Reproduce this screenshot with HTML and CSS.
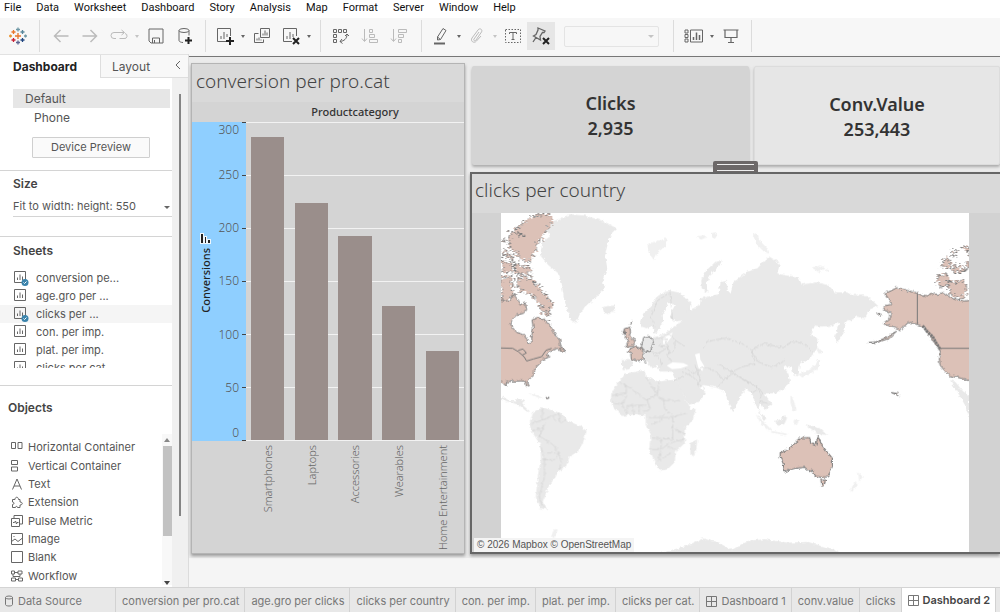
FILE: index.html
```html
<!DOCTYPE html>
<html lang="en">
<head>
  <meta charset="UTF-8">
  <title>Dashboard 2</title>
  <meta name="viewport" content="width=device-width, initial-scale=1.0">
  <link rel="stylesheet" href="styles.css">
</head>
<body>
  <nav class="menu">
    <a href="#">File</a>
    <a href="#">Data</a>
    <a href="#">Worksheet</a>
    <a href="#">Dashboard</a>
    <a href="#">Story</a>
    <a href="#">Analysis</a>
    <a href="#">Map</a>
    <a href="#">Format</a>
    <a href="#">Server</a>
    <a href="#">Window</a>
    <a href="#">Help</a>
  </nav>

  <div class="toolbar">
    <div class="group logo">
      <svg width="18" height="18" viewBox="0 0 18 18" fill="none" stroke-width="1.3">
        <path d="M9 6v6M6 9h6" stroke="#e8762c"/>
        <path d="M9 0.5v4M7 2.5h4" stroke="#7099a6"/>
        <path d="M9 13.5v4M7 15.5h4" stroke="#5b6591"/>
        <path d="M4.5 3v4M2.5 5h4" stroke="#e8762c"/>
        <path d="M13.5 3v4M11.5 5h4" stroke="#59879b"/>
        <path d="M4.5 11v4M2.5 13h4" stroke="#c72035"/>
        <path d="M13.5 11v4M11.5 13h4" stroke="#1f447e"/>
        <path d="M1.5 7.5v3M0 9h3" stroke="#eb912c"/>
        <path d="M16.5 7.5v3M15 9h3" stroke="#7099a6"/>
      </svg>
    </div>
    <div class="group history">
      <button class="tool off" aria-label="Undo"><svg width="16" height="16" viewBox="0 0 16 16"><path d="M15.5 8H1.5M7.5 2l-6 6 6 6" stroke-width="1.5"/></svg></button>
      <button class="tool off" aria-label="Redo"><svg width="16" height="16" viewBox="0 0 16 16"><path d="M0.5 8h14M8.5 2l6 6-6 6" stroke-width="1.5"/></svg></button>
      <button class="tool off" aria-label="Replay"><svg width="18" height="16" viewBox="0 0 18 16"><path d="M6 10.5H4a3 3 0 0 1 0-6h10M11.5 2l3 2.500-3 2.500M15 5.500a2.500 2.500 0 0 1-1 5H9.500"/></svg></button>
      <span class="caret off"></span>
      <button class="tool" aria-label="Save"><svg width="16" height="16" viewBox="0 0 16 16"><path d="M1 1h14v14H3l-2-2zM4.500 15v-5h7v5M6.500 12v3"/></svg></button>
      <button class="tool" aria-label="New data source"><svg width="16" height="18" viewBox="0 0 16 18"><path d="M2 3.500v10c0 1 2 2 4 2M12 3.500v5"/><ellipse cx="7" cy="3.500" rx="5" ry="2"/><path class="mark" d="M11.500 10v7M8 13.500h7"/></svg></button>
    </div>
    <div class="group sheets-tools">
      <button class="tool" aria-label="New worksheet"><svg width="18" height="18" viewBox="0 0 18 18"><path d="M10 14.500H1.500v-13h13V9M5 12V9M8 12V5M11 10V7"/><path class="mark" d="M14 10v8M10 14h8"/></svg></button>
      <span class="caret"></span>
      <button class="tool" aria-label="Duplicate"><svg width="18" height="18" viewBox="0 0 18 18"><path d="M7.500 1.500h9v9h-9zM10 8.500v-2M12 8.500v-5M14 8.500v-3M5.500 6.500h-4v9h9v-3M4 13.500v-2M6 13.500v-3M8 13.500v-1"/></svg></button>
      <button class="tool" aria-label="Clear sheet"><svg width="18" height="18" viewBox="0 0 18 18"><path d="M10 14.500H1.500v-13h13V9M5 12V9M8 12V5M11 10V7"/><path class="mark" d="M11 11l6 6M17 11l-6 6"/></svg></button>
      <span class="caret"></span>
    </div>
    <div class="group sort-tools">
      <button class="tool" aria-label="Swap rows and columns"><svg width="18" height="18" viewBox="0 0 18 18"><path d="M1.500 2.500h3v3h-3zM6.500 2.500h3v3h-3zM11.500 2.500h3v3h-3zM1.500 7.500h3v3h-3zM1.500 12.500h3v3h-3zM15 7c0 5-3 7-7 7.500M13 9l2-2 2 2M10 12l-2 2.500 2.500 2"/></svg></button>
      <button class="tool off" aria-label="Sort ascending"><svg width="18" height="16" viewBox="0 0 18 16"><path d="M3.500 1v12M1 10.500l2.500 3 2.500-3M8.500 1.500h3v3h-3zM8.500 6.500h5v3h-5zM8.500 11.500h8v3h-8z"/></svg></button>
      <button class="tool off" aria-label="Sort descending"><svg width="18" height="16" viewBox="0 0 18 16"><path d="M3.500 1v12M1 10.500l2.500 3 2.500-3M8.500 1.500h8v3h-8zM8.500 6.500h5v3h-5zM8.500 11.500h3v3h-3z"/></svg></button>
    </div>
    <div class="group format-tools">
      <button class="tool" aria-label="Highlight"><svg width="16" height="18" viewBox="0 0 16 18"><path d="M10 1.500l3 2-5.500 9-3 .5v-3zM4.500 10l3 2.500"/><path d="M1 16.500h11" stroke-width="2"/></svg></button>
      <span class="caret"></span>
      <button class="tool off" aria-label="Group"><svg width="16" height="16" viewBox="0 0 16 16"><path d="M10 4L5 11c-1 1.500 1 2.500 2 1l5.500-8c1.500-2.500-2-4.500-3.500-2L3 10c-2 3 2 6 4.500 3L12 8"/></svg></button>
      <span class="caret off"></span>
      <button class="tool" aria-label="Show mark labels"><svg width="16" height="16" viewBox="0 0 16 16"><path d="M.5 1.500h15v13H.5z" stroke-dasharray="1.500 1.500"/><path d="M4.500 6V4.500h7V6M8 4.500v7M6.500 11.500h3"/></svg></button>
      <button class="tool on" aria-label="Fix axes"><svg width="20" height="20" viewBox="0 0 20 20"><path d="M7 2l7 3-1 1.500-1.500 0-2.500 4 .5 3.500-7-4 2.500-1.500 2-4.500zM5 11.500L2 16" stroke-width="1.300"/><path class="mark" d="M12 12l6 6M18 12l-6 6"/></svg></button>
      <div class="fit"><select aria-label="Fit" disabled><option></option></select></div>
    </div>
    <div class="group view-tools">
      <button class="tool" aria-label="Show cards"><svg width="20" height="16" viewBox="0 0 20 16"><path d="M1 2h3v3H1zM1 6.500h3v3H1zM1 11h3v3H1zM6.500 2h12v12h-12z"/><path d="M9.500 12V9M12.500 12V4.500M15.500 12V7" stroke-width="1.500"/></svg></button>
      <span class="caret"></span>
      <button class="tool" aria-label="Presentation mode"><svg width="16" height="16" viewBox="0 0 16 16"><path d="M.5 2h15M2 2v7.500h12V2M8 9.500V14M5 14.500h6" stroke-width="1.200"/></svg></button>
    </div>
  </div>

  <div class="main">
    <aside class="side">
      <div class="side-tabs">
        <button class="side-tab active">Dashboard</button>
        <button class="side-tab">Layout</button>
        <button class="collapse" aria-label="Collapse"><svg width="6" height="10" viewBox="0 0 6 10"><path d="M5 1L1 5l4 4"/></svg></button>
      </div>
      <div class="side-body">
        <div class="side-content">
          <section class="device">
            <a class="device-item selected" href="#">Default</a>
            <a class="device-item child" href="#">Phone</a>
            <button class="preview">Device Preview</button>
          </section>
          <section class="size">
            <h3><label for="size">Size</label></h3>
            <div class="size-box">
              <select id="size"><option>Fit to width: height: 550</option></select>
            </div>
          </section>
          <section class="sheets">
            <h3>Sheets</h3>
            <ul>
              <li><svg class="sheet-icon" viewBox="0 0 16 16"><use href="#sheet"/><use href="#used"/></svg>conversion pe...</li>
              <li><svg class="sheet-icon" viewBox="0 0 16 16"><use href="#sheet"/></svg>age.gro per ...</li>
              <li class="hover"><svg class="sheet-icon" viewBox="0 0 16 16"><use href="#sheet"/><use href="#used"/></svg>clicks per ...</li>
              <li><svg class="sheet-icon" viewBox="0 0 16 16"><use href="#sheet"/></svg>con. per imp.</li>
              <li><svg class="sheet-icon" viewBox="0 0 16 16"><use href="#sheet"/></svg>plat. per imp.</li>
              <li><svg class="sheet-icon" viewBox="0 0 16 16"><use href="#sheet"/></svg>clicks per cat.</li>
            </ul>
          </section>
          <section class="objects">
            <h3>Objects</h3>
            <div class="objects-box">
              <ul>
                <li><svg viewBox="0 0 12 12"><path d="M.5 1.500h4v6h-4zM7 1.500h4v6H7z"/></svg>Horizontal Container</li>
                <li><svg viewBox="0 0 12 12"><path d="M.5 .5h6v4h-6zM.5 7h6v4h-6z"/></svg>Vertical Container</li>
                <li><svg viewBox="0 0 12 12"><path d="M1.500 11.500L6 1l4.500 10.500M3 8h6"/></svg>Text</li>
                <li><svg viewBox="0 0 12 12"><path d="M1.500 11.500V8.500c2 0 2-2.500 0-2.500V3.500h2.500c0-3 3.500-3 3.500 0H9V6c3 0 3 3 0 3v2.500H6.500c0-1.500-2-1.500-2 0z"/></svg>Extension</li>
                <li><svg viewBox="0 0 12 12"><path d="M.5 3.500h8v8h-8zM3 3V.5h8.500V9H9M2 7.500h1.500L4.500 6l1 3 .5-1.500h1.500"/></svg>Pulse Metric</li>
                <li><svg viewBox="0 0 12 12"><path d="M.5 .5h11v11H.5zM.5 8.500L4 6l3 2.500L11.500 5M3 3v1"/></svg>Image</li>
                <li><svg viewBox="0 0 12 12"><path d="M.5 .5h11v11H.5z"/></svg>Blank</li>
                <li><svg viewBox="0 0 12 12"><path d="M.5 1h3v3h-3zM7 1h4v3H7zM3.500 2.500H7M2 4v2.500h7V4M.5 8h4v3h-4zM7.500 8h4v3h-4zM5 9.500h2"/></svg>Workflow</li>
              </ul>
              <div class="scroll"><i class="up"></i><i class="thumb"></i><i class="down"></i></div>
            </div>
          </section>
        </div>
        <div class="side-scroll"></div>
      </div>
    </aside>

    <main class="canvas">
      <div class="dashboard">
        <section class="panel chart">
          <h2>conversion per pro.cat</h2>
          <div class="chart-head">Productcategory</div>
          <div class="plot-row">
            <div class="axis">
              <div class="axis-title">
                <svg width="11" height="11" viewBox="0 0 11 11"><path d="M0 0h4v3h3v3h4v5H0z" fill="#eef6fc"/><path d="M1 1h2v9H1zM5 4h1v6H5zM8 7h2v3H8z" fill="#222"/></svg>
                <span>Conversions</span>
              </div>
              <div class="ticks">
                <span>300</span><span>250</span><span>200</span><span>150</span><span>100</span><span>50</span><span>0</span>
              </div>
            </div>
            <div class="plot">
              <div class="bar" style="height: 95.3%"></div>
              <div class="bar" style="height: 74.4%"></div>
              <div class="bar" style="height: 64%"></div>
              <div class="bar" style="height: 42.2%"></div>
              <div class="bar" style="height: 28%"></div>
            </div>
          </div>
          <div class="categories">
            <span>Smartphones</span>
            <span>Laptops</span>
            <span>Accessories</span>
            <span>Wearables</span>
            <span>Home Entertainment</span>
          </div>
        </section>

        <div class="right">
          <div class="kpis">
            <section class="kpi"><b>Clicks</b><b>2,935</b></section>
            <section class="kpi light"><b>Conv.Value</b><b>253,443</b></section>
          </div>
          <section class="panel map">
            <div class="grip"></div>
            <h2>clicks per country</h2>
            <div class="map-area">
              <svg class="world" viewBox="93 24 1404 1017" preserveAspectRatio="xMidYMid slice">
                <defs>
                  <filter id="coast" x="-5%" y="-5%" width="110%" height="110%" color-interpolation-filters="sRGB">
                    <feTurbulence type="fractalNoise" baseFrequency="0.1" numOctaves="2" seed="4"/>
                    <feDisplacementMap in="SourceGraphic" scale="12" xChannelSelector="R" yChannelSelector="G"/>
                  </filter>
                  <filter id="fjords" x="-5%" y="-5%" width="110%" height="110%" color-interpolation-filters="sRGB">
                    <feTurbulence type="fractalNoise" baseFrequency="0.12" numOctaves="3" seed="9"/>
                    <feDisplacementMap in="SourceGraphic" scale="34" xChannelSelector="R" yChannelSelector="G"/>
                  </filter>
                </defs>
                <g class="land" filter="url(#coast)">
                  <!-- greenland, iceland, arctic islands -->
                  <path d="M225 60L262 45 300 28 345 32 400 48 440 70 425 85 415 110 405 150 412 190 398 225 405 250 375 280 345 305 328 330 318 355 302 345 290 310 282 280 275 235 265 205 235 180 210 150 218 110 240 95z"/>
                  <path d="M398 308L412 303 432 302 436 315 415 328 402 322z"/>
                  <path class="faint" d="M535 115L560 108 590 100 588 122 565 140 552 165 540 150z"/>
                  <path class="faint" d="M680 95l25-5 8 6-20 8zM722 85l16-4 4 12-14 6z"/>
                  <path d="M695 250L694 225 710 195 735 172 755 165 752 178 725 205 710 230 712 262z"/>
                  <path class="faint" d="M848 88l14-4 6 22 26 26 4 14-16-6-22-22zM1025 188l28-6 14 8-20 12zM1066 192l10 4-4 6z"/>
                  <!-- scandinavia -->
                  <path d="M510 350L520 325 545 300 558 278 575 265 600 257 625 263 645 275 660 300 660 325 650 345 610 350 600 338 605 320 615 300 595 292 584 315 578 330 580 350 568 375 555 388 545 362 530 370 515 365z"/>
                  <!-- eurasia -->
                  <path d="M640 275L665 295 650 320 690 300 692 280 715 275 745 268 752 232 768 228 775 262 782 262 790 232 812 215 832 200 862 190 885 165 898 155 930 175 922 205 950 212 985 215 995 238 1020 235 1040 232 1075 240 1095 262 1130 262 1150 270 1180 268 1200 280 1225 303 1205 308 1192 325 1185 340 1160 335 1145 345 1128 350 1122 380 1102 415 1095 398 1102 370 1108 352 1085 362 1055 365 1035 362 1020 390 1042 400 1042 430 1020 460 990 475 985 510 970 508 965 485 940 485 955 505 960 530 945 550 915 565 885 565 892 578 908 598 885 615 870 592 866 615 890 642 880 644 858 600 845 565 825 550 810 580 798 600 790 622 774 592 764 560 740 548 700 540 688 548 708 562 690 588 655 600 640 570 618 530 605 500 570 500 560 480 545 490 520 455 515 440 520 400 560 395 585 385 612 365 640 345z"/>
                  <path d="M455 465L485 465 490 475 478 492 458 495z"/>
                  <!-- japan -->
                  <path class="faint" d="M985 508l12-6 20-8 20-14 8-20 6 6-8 26-22 14-24 12zM1038 430l14 4 8 10-14 2z"/>
                  <path d="M1440 525L1455 530 1480 560 1497 570V640L1485 600 1462 560z"/>
                  <g transform="matrix(1.014 0 0 1.014 0 -6.5)">
                    <!-- africa -->
                    <path d="M460 505L515 495 522 515 560 528 605 523 618 535 640 585 652 610 668 610 660 640 635 670 636 710 610 735 605 768 585 788 560 793 545 765 530 730 535 685 520 655 520 630 492 625 452 630 425 605 417 590 418 562 440 530z"/>
                    <path d="M652 710L672 700 670 730 660 752 652 745z"/>
                    <!-- south america -->
                    <path d="M188 618L215 605 270 622 290 645 325 660 345 675 338 700 322 735 295 750 285 778 265 792 250 815 235 835 225 860 215 885 228 907 205 903 195 870 200 815 210 755 208 715 185 680 175 655 182 635z"/>
                    <path d="M93 570L115 585 135 588 140 580 160 582 158 600 178 618 168 618 145 598 93 582z"/>
                    <path class="faint" d="M170 562l30 8 22 10-28-6zM240 985l10-20 10 2-12 26z"/>
                    <!-- indonesia, philippines, new zealand -->
                    <path class="faint" d="M845 625L862 640 892 672 885 676 862 655zM892 675l45 8 0 4-44-6zM958 640l14 6-6 14-8-6zM948 570l10 14 8 30-8 4-10-26z"/>
                    <path d="M902 645L920 640 930 628 938 636 930 655 912 660zM990 655l20 4 25 8 22 20-16-2-20-6-12-10z"/>
                    <path class="faint" d="M1148 795l14 16-10 14zM1122 850l22-26 4 6-18 26z"/>
                    <!-- antarctica -->
                    <path d="M500 1051L590 1030 640 1015 690 993 735 1005 775 1027 820 1000 870 995 905 1000 940 1005 1000 1003 1040 1015 1080 1025 1105 1051z"/>
                  </g>
                </g>
                <path class="sea" d="M590 482l18-10 32 2 16 8-24 8-26 2zM675 448l14-4 2 20 12 20-6 14-12-10zM578 400l30-18-4 14-14 18-10 4z"/>
                <path class="borders" filter="url(#coast)" d="M600 260l8 85M555 365l-12-30 20-48 30-20M520 425l40-25 28 0 5 30-30 15-30-8M595 385l20 20 0 30-25 15 15 20M548 445l22 15 5 25M565 420l25 5 10 20M615 405l30 20M645 490l30 15 30-20M700 430l10-20 60-12 50 20 25 18 10 40-40 10-30 15-45-25M845 436l35-20 60 12 30-20 40 12 20 25M845 436l20 35 40 15 40-20M780 495l30 20 50 30 10 18M705 485l35 15 20 25-15 20M675 480l15 40-5 25M635 500l30 12 40 40M615 525l25-10M760 525l30-20 20 12 50 30M855 545l20 15-5 30 25 5M845 565l15-10"/>
                <g class="borders" filter="url(#coast)">
                  <path transform="matrix(1.014 0 0 1.014 0 -6.5)" d="M440 530l22 10 0 25-42 5M462 540l62 45 30-20-35-50M560 528l-6 45 18 12 50 0M554 565l-30 20 10 25-20 10M572 575l4 35 26 22 40-10M600 632l0 35 30 15M420 590l30 5 15-25M450 595l12 30M465 600l0 28M480 600l5 25M500 598l0 28M462 600l60-2M530 635l70 0M535 655l30-10 10-20M535 695l65 5 0-30M565 700l0 30-35 0M565 730l-8 35M565 730l20-15 25-10 26-5M585 720l22 10M560 760l35-20M610 670l26 15M215 608l-2 35-30 10M213 643l30-12 20-8M263 622l4 28 22-6M245 630l10 20M205 690l18-40M185 675l30-10-10 25 40 25 20 25-15 20-30 0-10-40M220 760l0 50-15 60 12 30M260 740l10 25-5 25M222 740l35 0"/>
                </g>

                <!-- canadian arctic -->
                <g class="counted" filter="url(#fjords)">
                  <path d="M170 45L185 35 205 30 235 28 250 42 248 55 230 72 222 88 212 105 200 118 198 135 188 150 186 165 170 172 152 165 150 152 135 145 122 130 115 110 120 85 132 78 148 88 160 95 172 92 142 90 133 72 150 65 158 52z"/>
                  <path d="M135 178l20 6 22-4 4 22-22 6-25-4zM95 172l14-4 8 10 12-6-2 28-30 4zM95 135l12 4 0 14-12 2zM112 145l18 6-4 12-14-6zM93 218l22-6 14 4-4 24 6 22-14 22-24 8zM98 102l8 4-4 8z"/>
                  <path d="M142 225L160 216 185 218 192 235 208 240 212 258 228 270 236 285 250 292 246 308 236 312 240 335 225 330 212 318 215 300 198 288 190 270 172 265 160 255 150 260 142 245z"/>
                  <path d="M1405 210l20-4 12 8-6 26-18 10-10-16zM1430 228l22 6 25-10 12 18 0 24-16 16-30-6-4-24zM1415 185l12-24 14 6 4 26 12-14 14 12 20 0-14 12-20-2-12-8zM1445 142l14-8-4 20-8 2zM1478 122l20 0 0 24-12-6zM1486 172l12 0 0 18-12-4z"/>
                </g>

                <g class="counted" filter="url(#coast)">
                  <!-- canada and usa, east -->
                  <path d="M80 285L105 288 122 285 130 268 145 285 150 300 165 290 170 315 160 325 140 330 125 345 122 362 140 382 160 388 170 402 176 415 186 412 184 392 190 370 186 345 200 338 215 340 232 350 240 362 250 378 258 392 268 400 272 425 284 432 280 442 262 430 240 438 228 452 240 455 215 465 210 475 195 490 192 510 178 522 172 530 178 545 170 545 165 528 150 528 125 528 108 532 110 545 96 532 80 530z"/>
                  <path d="M268 430l14 2 2 10-12-2zM228 578l8-2 0 4-7 1z"/>
                  <!-- united kingdom, france -->
                  <path d="M462 372L478 366 482 380 478 392 490 400 496 415 485 425 468 425 476 408 468 398zM484 352l2-2-4 8zM460 378l6 2-4 8zM480 432l14-8 24 8 0 20 2 12-20 4-16-6-2-18-10-4zM524 466l3 6z"/>
                  <!-- alaska, canada and usa, west -->
                  <path d="M1245 265L1262 258 1280 248 1310 256 1345 265 1362 275 1385 265 1402 268 1420 262 1445 280 1465 285 1485 288 1510 285V530L1475 520 1440 512 1422 495 1410 480 1408 460 1412 440 1392 412 1375 385 1360 365 1342 358 1322 352 1305 360 1290 378 1275 365 1255 362 1240 355 1262 338 1262 322 1240 315 1245 302 1265 298z"/>
                  <path d="M1195 413l25-3 36-16 24-16-22 22-36 12zM1222 326l12 2-6 4zM1265 563l16 2 8 10-10-6z"/>
                  <!-- australia -->
                  <path transform="matrix(1.014 0 0 1.014 0 -6.5)" d="M918 740L940 730 965 708 980 695 1005 695 1008 712 1022 718 1030 692 1040 715 1055 735 1072 755 1072 780 1060 810 1038 812 1022 808 1012 790 1005 795 990 782 965 785 930 795 926 770 917 750zM1038 820l14 0-4 16-7 2z"/>
                  <path class="germany" d="M522 396l10-2 14 6 4 14-4 10-4 16-16-2-12-12 4-20z"/>
                </g>
                <path class="lines" d="M93 429L128 430 145 440 162 455 170 468 190 462 215 455 228 436 245 430M145 436l14-4 10 12-12 6M1342 266V358M1410 430H1497"/>
                <path class="rough" d="M1358 362l14 18 16 14 12 22 12 18"/>
              </svg>
              <small class="credit">© 2026 Mapbox © OpenStreetMap</small>
            </div>
          </section>
        </div>
      </div>
    </main>
  </div>

  <nav class="tabs">
    <a class="source" href="#"><svg width="10" height="12" viewBox="0 0 10 12"><ellipse cx="5" cy="2.500" rx="3.500" ry="1.500"/><path d="M1.500 2.500v7c0 2 7 2 7 0v-7"/></svg>Data Source</a>
    <a href="#">conversion per pro.cat</a>
    <a href="#">age.gro per clicks</a>
    <a href="#">clicks per country</a>
    <a href="#">con. per imp.</a>
    <a href="#">plat. per imp.</a>
    <a href="#">clicks per cat.</a>
    <a href="#"><svg width="11" height="11" viewBox="0 0 11 11"><path d="M.5 .5h10v10H.5zM5.500 .5v10M.5 5.500h10"/></svg>Dashboard 1</a>
    <a href="#">conv.value</a>
    <a href="#">clicks</a>
    <a class="active" href="#"><svg width="11" height="11" viewBox="0 0 11 11"><path d="M.5 .5h10v10H.5zM5.500 .5v10M.5 5.500h10"/></svg>Dashboard 2</a>
  </nav>

  <svg class="symbols" width="0" height="0">
    <symbol id="sheet" viewBox="0 0 16 16"><path d="M1.500 1.500h11v11h-11zM4.500 10V7.500M7 10V4.500M9.500 10V6.500" fill="none" stroke="#666"/></symbol>
    <symbol id="used" viewBox="0 0 16 16"><circle cx="12" cy="12.500" r="3.500" fill="#3a83ab"/><path d="M10.500 12.500l1 1 2-2" fill="none" stroke="#fff"/></symbol>
  </svg>
</body>
</html>
```

FILE: styles.css
```css
:root {
  --ui: Inter, "Liberation Sans", sans-serif;
  --viz: "Noto Sans", "Open Sans", sans-serif;
  --line: #d4d4d4;
  --panel: #d4d4d4;
}

* {
  box-sizing: border-box;
}

body {
  margin: 0;
  height: 100vh;
  display: flex;
  flex-direction: column;
  overflow: hidden;
  font-family: var(--ui);
  font-size: 11px;
  color: #555;
  background: #f5f5f5;
}

a {
  color: inherit;
  text-decoration: none;
}

button, select {
  font: inherit;
  color: inherit;
}

ul {
  list-style: none;
  margin: 0;
  padding: 0;
}

h2, h3 {
  margin: 0;
}

svg {
  flex: none;
}

/* menu */
.menu {
  display: flex;
  gap: 15px;
  height: 18px;
  padding: 0 4px;
  line-height: 16px;
  font-family: Roboto, sans-serif;
  font-size: 11px;
  color: #111;
  background: #fff;
}

/* toolbar */
.toolbar {
  display: flex;
  height: 36px;
  padding: 2px 0;
  background: #f7f7f7;
}

.group {
  display: flex;
  align-items: center;
  border-right: 1px solid #dcdcdc;
}

.logo {
  padding: 0 12px 0 9px;
}

.history {
  padding: 0 6px;
}

.sheets-tools {
  padding: 0 7px 0 4px;
}

.sort-tools {
  padding: 0 8px 0 5px;
}

.format-tools {
  padding: 0 14px 0 5px;
}

.view-tools {
  padding: 0 6px 0 5px;
}

.tool {
  width: 29px;
  height: 28px;
  padding: 0;
  border: 0;
  background: none;
  display: flex;
  align-items: center;
  justify-content: center;
}

.format-tools .tool {
  width: 28px;
}

.tool svg {
  fill: none;
  stroke: #666;
}

.tool.off svg {
  stroke: #bbb;
}

.tool.on {
  background: #e6e6e6;
}

.tool svg .mark {
  stroke: #222;
  stroke-width: 2;
}

.caret {
  width: 8px;
  display: flex;
  justify-content: center;
}

.caret::after, .fit::after, .size-box::after {
  content: "";
  border: 2px solid transparent;
  border-top: 3px solid #666;
  border-bottom: 0;
}

.caret.off::after, .fit::after {
  border-top-color: #c4c4c4;
}

.fit, .size-box {
  position: relative;
}

.fit {
  margin-left: 9px;
}

.fit::after, .size-box::after {
  position: absolute;
  right: 5px;
  top: 9px;
  border-width: 3px 3px 0;
}

.fit select {
  display: block;
  appearance: none;
  width: 95px;
  height: 21px;
  border: 1px solid #dcdcdc;
  border-radius: 2px;
  background: #f7f7f7;
}

/* left pane */
.main {
  flex: 1;
  min-height: 0;
  display: flex;
}

.side {
  flex: none;
  width: 189px;
  display: flex;
  flex-direction: column;
  background: #f0f0f0;
  border-right: 1px solid #dcdcdc;
}

.side-tabs {
  display: flex;
  height: 24px;
  border-top: 1px solid #e2e2e2;
}

.side-tab, .collapse {
  border: 0;
  border-bottom: 1px solid #dedede;
  background: #f8f8f8;
  padding: 0;
}

.side-tab {
  flex: 1;
  padding-left: 11px;
  text-align: left;
  font-size: 12px;
  border-left: 1px solid #dedede;
}

.side-tab.active {
  flex: none;
  width: 100px;
  padding-left: 13px;
  font-weight: 700;
  color: #222;
  border: 0;
  background: #fff;
}

.collapse {
  width: 20px;
}

.collapse svg {
  fill: none;
  stroke: #666;
}

.side-body {
  flex: 1;
  min-height: 0;
  display: flex;
}

.side-content {
  width: 172px;
  display: flex;
  flex-direction: column;
  overflow: hidden;
  background: #fff;
}

.side-scroll {
  width: 2px;
  height: 422px;
  margin: 16px 0 0 7px;
  background: #858585;
}

.side h3 {
  font-size: 12px;
  line-height: 16px;
  font-weight: 600;
  color: #444;
}

.side section {
  border-bottom: 1px solid var(--line);
}

.device {
  height: 93px;
  padding: 11px 2px 0 13px;
}

.device-item {
  display: block;
  height: 19px;
  line-height: 19px;
  padding-left: 12px;
  font-size: 12px;
}

.device-item.selected {
  background: #e6e6e6;
}

.device-item.child {
  padding-left: 21px;
}

.preview {
  display: block;
  width: 118px;
  height: 21px;
  margin: 10px 0 0 19px;
  padding: 0 0 1px;
  border: 1px solid #cfcfcf;
  border-radius: 1px;
  background: #fafafa;
}

.size {
  height: 66px;
  padding: 5px 0 0 13px;
}

.size-box {
  margin-top: 4px;
}

.size-box::after {
  right: 2px;
  top: 10px;
}

.size-box select {
  display: block;
  appearance: none;
  width: 100%;
  height: 21px;
  padding: 0;
  border: 0;
  border-bottom: 1px solid var(--line);
  background: none;
}

.side .sheets {
  height: 149px;
  padding: 6px 0 17px;
  display: flex;
  flex-direction: column;
}

.sheets h3 {
  padding-left: 13px;
}

.sheets ul {
  margin-top: 10px;
  flex: 1;
  overflow: hidden;
}

.sheets li {
  height: 18px;
  padding-left: 13px;
  display: flex;
  align-items: center;
  gap: 7px;
}

.sheets .hover {
  background: #f5f5f5;
}

.sheet-icon {
  width: 16px;
  height: 16px;
}

.side .objects {
  flex: 1;
  padding: 14px 0 0 8px;
  border: 0;
}

.objects-box {
  display: flex;
  margin-top: 18px;
}

.objects ul {
  flex: 1;
  height: 147px;
  margin-top: 4px;
  display: flex;
  flex-direction: column;
}

.objects li {
  flex: 1;
  padding-left: 3px;
  display: flex;
  align-items: center;
  gap: 5px;
  white-space: nowrap;
}

.objects li svg {
  width: 12px;
  height: 12px;
  fill: none;
  stroke: #666;
  overflow: visible;
}

.scroll {
  width: 10px;
  display: flex;
  flex-direction: column;
  align-items: center;
  background: #f8f8f8;
}

.scroll .up {
  margin: 4px 0;
  border: 3px solid transparent;
  border-bottom: 4px solid #888;
  border-top: 0;
}

.scroll .thumb {
  width: 9px;
  height: 90px;
  background: #c2c2c2;
}

.scroll .down {
  margin-top: auto;
  border: 3px solid transparent;
  border-top: 4px solid #444;
  border-bottom: 0;
}

/* dashboard */
.canvas {
  flex: 1;
  min-width: 0;
  padding-top: 2px;
}

.dashboard {
  display: grid;
  grid-template-columns: 274fr 530fr;
  gap: 5px;
  padding: 6px 0 4px 2px;
  border-top: 1px solid #777;
  background: #ebebeb;
}

.panel h2 {
  font-family: var(--viz);
  font-size: 19px;
  line-height: 24px;
  font-weight: 300;
  color: #444;
}

.chart {
  display: flex;
  flex-direction: column;
  border: 1px solid #b4b4b4;
  background: var(--panel);
  box-shadow: 0 2px 3px #999;
  font-family: var(--viz);
}

.chart h2 {
  padding: 5px 4px 9px;
  background: #d9d9d9;
}

.chart-head {
  padding-left: 54px;
  line-height: 20px;
  text-align: center;
  font-weight: 500;
  color: #333;
}

.plot-row {
  flex: 1;
  display: flex;
}

.axis {
  width: 54px;
  display: flex;
  background: #8fcfff;
}

.axis-title {
  width: 28px;
  padding-bottom: 18px;
  display: flex;
  flex-direction: column;
  align-items: center;
  justify-content: center;
  gap: 4px;
  font-weight: 500;
  color: #222;
}

.axis-title span, .categories span {
  writing-mode: vertical-rl;
  transform: rotate(180deg);
}

.ticks {
  flex: 1;
  display: flex;
  flex-direction: column;
  justify-content: space-between;
  font-size: 12px;
  font-weight: 300;
  line-height: 16px;
}

.ticks span {
  height: 0;
  display: flex;
  align-items: center;
  justify-content: flex-end;
  gap: 3px;
}

.ticks span::after {
  content: "";
  width: 4px;
  height: 1px;
  background: #444;
}

.ticks span:first-child {
  align-items: flex-start;
}

.ticks span:last-child {
  align-items: flex-end;
}

.plot {
  flex: 1;
  display: grid;
  grid-template-columns: repeat(5, 1fr);
  align-items: end;
  justify-items: center;
  border-bottom: 1px solid #f2f2f2;
  background: linear-gradient(#f2f2f2 1px, transparent 1px) 0 0 / 100% calc(100% / 6);
}

.bar {
  width: 76%;
  background: #9a8e8b;
}

.categories {
  height: 112px;
  margin-left: 54px;
  padding-top: 4px;
  display: grid;
  grid-template-columns: repeat(5, 1fr);
  justify-items: center;
  align-items: start;
  font-weight: 300;
  color: #666;
}

.right {
  min-width: 0;
}

.kpis {
  display: grid;
  grid-template-columns: 277fr 246fr;
  gap: 5px;
  padding: 3px 0 7px 2px;
}

.kpi {
  height: 99px;
  display: flex;
  flex-direction: column;
  align-items: center;
  justify-content: center;
  font-family: var(--viz);
  font-size: 18px;
  line-height: 25px;
  color: #333;
  background: var(--panel);
  border-radius: 2px;
  box-shadow: 0 2px 3px #aaa;
}

.kpi b {
  font-weight: 600;
}

.kpi.light {
  background: #e6e6e6;
  border: 1px solid #dcdcdc;
  padding-top: 2px;
}

.map {
  position: relative;
  border: 2px solid #666;
  border-right: 0;
  background: #d9d9d9;
  box-shadow: 0 2px 3px #999;
}

.map h2 {
  padding: 4px 3px 11px;
}

.grip {
  position: absolute;
  top: -13px;
  left: calc(50% - 23px);
  width: 45px;
  height: 11px;
  padding: 3px 4px;
  border-radius: 2px 2px 0 0;
  background: #6c6868;
}

.grip::before {
  content: "";
  display: block;
  height: 5px;
  border: 1px solid #eee;
  border-width: 1px 0;
}

.map-area {
  position: relative;
  padding: 0 31px 0 29px;
  background: #d2d2d2;
}

.world {
  display: block;
  width: 100%;
  height: auto;
  background: #fff;
}

.land {
  fill: #e9e9e9;
}

.land .faint {
  fill: #f0f0f0;
}

.sea {
  fill: #fff;
}

.borders {
  fill: none;
  stroke: #d2d2d2;
  stroke-width: 2;
}

.counted {
  fill: #dcc1b7;
  stroke: #777;
  stroke-width: 3;
}

.counted .germany {
  fill: #e9e9e9;
}

.lines, .rough {
  fill: none;
  stroke: #777;
  stroke-width: 3;
}

.rough {
  stroke-width: 8;
  stroke-dasharray: 7 2;
}

.credit {
  position: absolute;
  left: 2px;
  bottom: 0;
  padding: 0 3px;
  font-family: "Liberation Sans", Arial, sans-serif;
  font-size: 10px;
  line-height: 14px;
  color: #555;
  background: #f4f4f4;
}

/* sheet tabs */
.tabs {
  display: flex;
  height: 25px;
  flex: none;
  border-top: 1px solid #d4d4d4;
  background: #e8e8e8;
  color: #777;
}

.tabs a {
  flex: none;
  display: flex;
  align-items: center;
  gap: 4px;
  padding: 2px 5px 0 6px;
  border-right: 1px solid #d2d2d2;
  white-space: nowrap;
}

.tabs svg {
  fill: none;
  stroke: #777;
}

.tabs .source {
  width: 116px;
  padding-left: 4px;
}

.tabs .active {
  padding-bottom: 2px;
  font-weight: 600;
  color: #444;
  background: #fff;
}

.symbols {
  position: absolute;
}
```
